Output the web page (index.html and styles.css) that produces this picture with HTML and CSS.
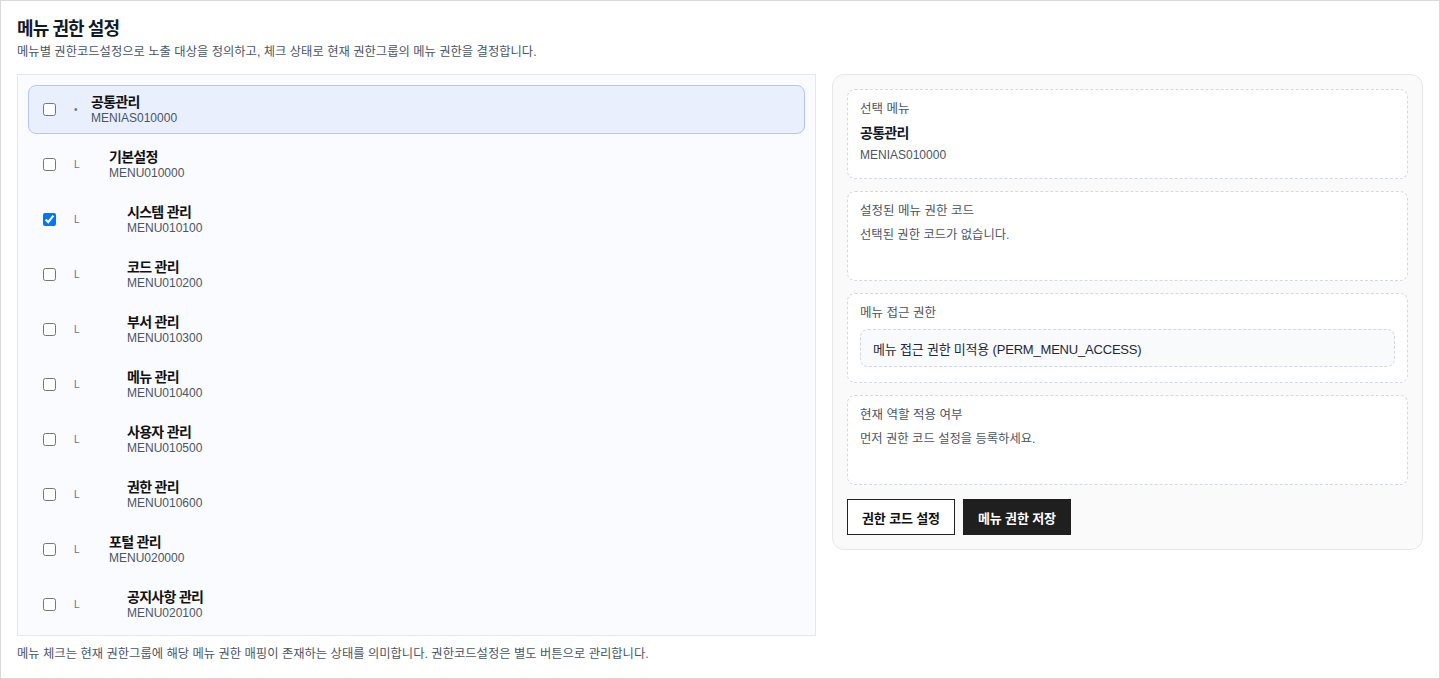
FILE: index.html
```html
<!DOCTYPE html>
<html lang="ko">
<head>
  <meta charset="UTF-8">
  <meta name="viewport" content="width=device-width, initial-scale=1.0">
  <link rel="stylesheet" href="styles.css">
  <title>메뉴 권한 설정</title>
</head>
<body>
<div class="page">
  <h1 class="title">메뉴 권한 설정</h1>
  <p class="desc">메뉴별 권한코드설정으로 노출 대상을 정의하고, 체크 상태로 현재 권한그룹의 메뉴 권한을 결정합니다.</p>

  <div class="layout">
    <div class="tree">
      <label class="row selected">
        <input type="checkbox" class="check">
        <span class="marker">•</span>
        <span class="item lv0"><span class="name">공통관리</span><span class="code">MENIAS010000</span></span>
      </label>
      <label class="row">
        <input type="checkbox" class="check">
        <span class="marker">L</span>
        <span class="item lv1"><span class="name">기본설정</span><span class="code">MENU010000</span></span>
      </label>
      <label class="row">
        <input type="checkbox" class="check" checked>
        <span class="marker">L</span>
        <span class="item lv2"><span class="name">시스템 관리</span><span class="code">MENU010100</span></span>
      </label>
      <label class="row">
        <input type="checkbox" class="check">
        <span class="marker">L</span>
        <span class="item lv2"><span class="name">코드 관리</span><span class="code">MENU010200</span></span>
      </label>
      <label class="row">
        <input type="checkbox" class="check">
        <span class="marker">L</span>
        <span class="item lv2"><span class="name">부서 관리</span><span class="code">MENU010300</span></span>
      </label>
      <label class="row">
        <input type="checkbox" class="check">
        <span class="marker">L</span>
        <span class="item lv2"><span class="name">메뉴 관리</span><span class="code">MENU010400</span></span>
      </label>
      <label class="row">
        <input type="checkbox" class="check">
        <span class="marker">L</span>
        <span class="item lv2"><span class="name">사용자 관리</span><span class="code">MENU010500</span></span>
      </label>
      <label class="row">
        <input type="checkbox" class="check">
        <span class="marker">L</span>
        <span class="item lv2"><span class="name">권한 관리</span><span class="code">MENU010600</span></span>
      </label>
      <label class="row">
        <input type="checkbox" class="check">
        <span class="marker">L</span>
        <span class="item lv1"><span class="name">포털 관리</span><span class="code">MENU020000</span></span>
      </label>
      <label class="row">
        <input type="checkbox" class="check">
        <span class="marker">L</span>
        <span class="item lv2"><span class="name">공지사항 관리</span><span class="code">MENU020100</span></span>
      </label>
    </div>

    <div class="detail">
      <div class="card">
        <div class="label">선택 메뉴</div>
        <div class="card-name">공통관리</div>
        <div class="card-code">MENIAS010000</div>
      </div>
      <div class="card">
        <div class="label">설정된 메뉴 권한 코드</div>
        <div class="card-text">선택된 권한 코드가 없습니다.</div>
      </div>
      <div class="card">
        <div class="label">메뉴 접근 권한</div>
        <div class="perm">메뉴 접근 권한 미적용 (PERM_MENU_ACCESS)</div>
      </div>
      <div class="card">
        <div class="label">현재 역할 적용 여부</div>
        <div class="card-text">먼저 권한 코드 설정을 등록하세요.</div>
      </div>
      <div class="actions">
        <button type="button" class="btn">권한 코드 설정</button>
        <button type="button" class="btn primary">메뉴 권한 저장</button>
      </div>
    </div>
  </div>

  <p class="note">메뉴 체크는 현재 권한그룹에 해당 메뉴 권한 매핑이 존재하는 상태를 의미합니다. 권한코드설정은 별도 버튼으로 관리합니다.</p>
</div>
</body>
</html>
```

FILE: styles.css
```css
* {
  box-sizing: border-box;
}

body {
  margin: 0;
  font-family: "Liberation Sans", "Noto Sans CJK KR", sans-serif;
  color: #111827;
}

.page {
  height: 100vh;
  border: 1px solid #d9d9d9;
  padding: 17px 16px 0;
}

.title {
  margin: 0;
  font-size: 18px;
  line-height: 22px;
  font-weight: 700;
  letter-spacing: -0.05em;
}

.desc {
  margin: 3px 0 13px;
  font-size: 12.3px;
  line-height: 18px;
  color: #4b5563;
}

.layout {
  display: grid;
  grid-template-columns: 799px 1fr;
  gap: 16px;
  align-items: start;
}

/* menu tree */
.tree {
  height: 562px;
  overflow: hidden;
  border: 1px solid #e5e7eb;
  background: #fafbfe;
  padding: 10px;
  display: flex;
  flex-direction: column;
  gap: 6px;
}

.row {
  flex: none;
  height: 49px;
  display: flex;
  align-items: center;
  padding-left: 14px;
  border: 1px solid transparent;
  border-radius: 8px;
  cursor: pointer;
}

.row.selected {
  background: #e9effd;
  border-color: #b7c6f6;
}

.check {
  margin: 0;
  width: 13px;
  height: 13px;
}

.marker {
  width: 17px;
  margin-left: 18px;
  font-size: 10px;
  color: #64748b;
}

.item {
  display: flex;
  flex-direction: column;
}

.lv1 {
  margin-left: 18px;
}

.lv2 {
  margin-left: 36px;
}

.name {
  font-size: 14px;
  line-height: 17px;
  font-weight: 700;
  color: #111;
  letter-spacing: -0.05em;
}

.code {
  font-size: 12px;
  line-height: 15px;
  color: #4b5563;
}

/* right side */
.detail {
  border: 1px solid #e5e7eb;
  border-radius: 12px;
  background: #fafafa;
  padding: 14px;
  display: flex;
  flex-direction: column;
  gap: 12px;
}

.card {
  min-height: 90px;
  border: 1px dashed #d3d9e4;
  border-radius: 8px;
  background: #fff;
  padding: 12px;
}

.label {
  font-size: 12.5px;
  line-height: 14px;
  color: #4b5563;
}

.card-name {
  margin-top: 8px;
  font-size: 14px;
  line-height: 18px;
  font-weight: 700;
  letter-spacing: -0.05em;
}

.card-code {
  margin-top: 5px;
  font-size: 12px;
  line-height: 16px;
  color: #4b5563;
}

.card-text {
  margin-top: 9px;
  font-size: 12.3px;
  line-height: 16px;
  color: #4b5563;
}

.perm {
  margin-top: 9px;
  height: 38px;
  display: flex;
  align-items: center;
  padding: 0 12px;
  border: 1px dashed #d3d9e4;
  border-radius: 8px;
  background: #f8fafc;
  font-size: 13px;
  color: #1f2937;
  letter-spacing: -0.015em;
}

.actions {
  display: flex;
  gap: 8px;
  margin-top: 2px;
}

.btn {
  height: 36px;
  padding: 0 14px;
  border: 1px solid #222;
  background: #fff;
  color: #111;
  font-family: inherit;
  font-size: 13px;
  font-weight: 600;
  letter-spacing: -0.01em;
  cursor: pointer;
}

.btn.primary {
  background: #1f1f1f;
  border-color: #1f1f1f;
  color: #fff;
}

.note {
  margin: 11px 0 0;
  font-size: 12.3px;
  line-height: 14px;
  color: #4b5563;
}
```
